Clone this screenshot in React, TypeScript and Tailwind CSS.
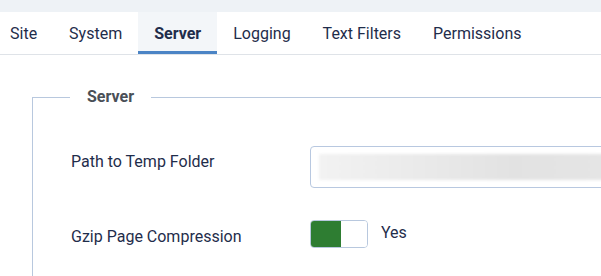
import React from 'react';

const tabs = ['Site', 'System', 'Server', 'Logging', 'Text Filters', 'Permissions'];

const App: React.FC = () => {
    return (
        <div className="w-[601px] h-[276px] overflow-hidden bg-white font-['Roboto',sans-serif] text-[#1f2d4b]">
            {/* top strip */}
            <div className="h-[12px] bg-[#eef2f6]" />

            {/* Tabs */}
            <div className="flex h-[43px] border-b border-[#dfe3e8]">
                <div className="flex -ml-[6px]">
                    {tabs.map((t) => (
                        <div
                            key={t}
                            className={
                                t === 'Server'
                                    ? 'flex items-center px-[16px] text-[16px] font-bold bg-[#f3f6f9] border-b-[3px] border-[#4b84c5] pt-[4px]'
                                    : 'flex items-center px-[16px] pt-[1px] text-[16px]'
                            }
                        >
                            {t}
                        </div>
                    ))}
                </div>
            </div>

            {/* Fieldset */}
            <fieldset className="ml-[32px] mt-[31px] w-[700px] border border-[#b8c8de] pl-[38px] pb-[40px]">
                <legend className="-ml-[1px] px-[17px] text-[16px] font-bold text-[#4a4f57] leading-[22px]">
                    Server
                </legend>

                <div className="flex items-start mt-[38px]">
                    <div className="w-[239px] pt-[7px] text-[16px] leading-[18px]">Path to Temp Folder</div>
                    <div className="w-[400px] h-[42px] rounded-[4px] border border-[#b8c8e0] pl-[8px] pt-[7px]">
                        <div className="h-[26px] w-[390px] bg-gradient-to-r from-[#f2f2f2] via-[#e2e2e2] to-[#e8e8e8] blur-[1.5px]" />
                    </div>
                </div>

                <div className="flex items-center mt-[32px]">
                    <div className="w-[239px] pt-[6px] text-[16px] leading-[18px]">Gzip Page Compression</div>
                    <div className="flex w-[58px] h-[28px] rounded-[4px] border border-[#b8c8de] overflow-hidden">
                        <div className="w-[30px] h-full bg-[#2e7d32]" />
                        <div className="flex-1 bg-white" />
                    </div>
                    <div className="ml-[13px] text-[16px] leading-[18px] -mt-[2px]">Yes</div>
                </div>
            </fieldset>
        </div>
    );
};

export default App;
